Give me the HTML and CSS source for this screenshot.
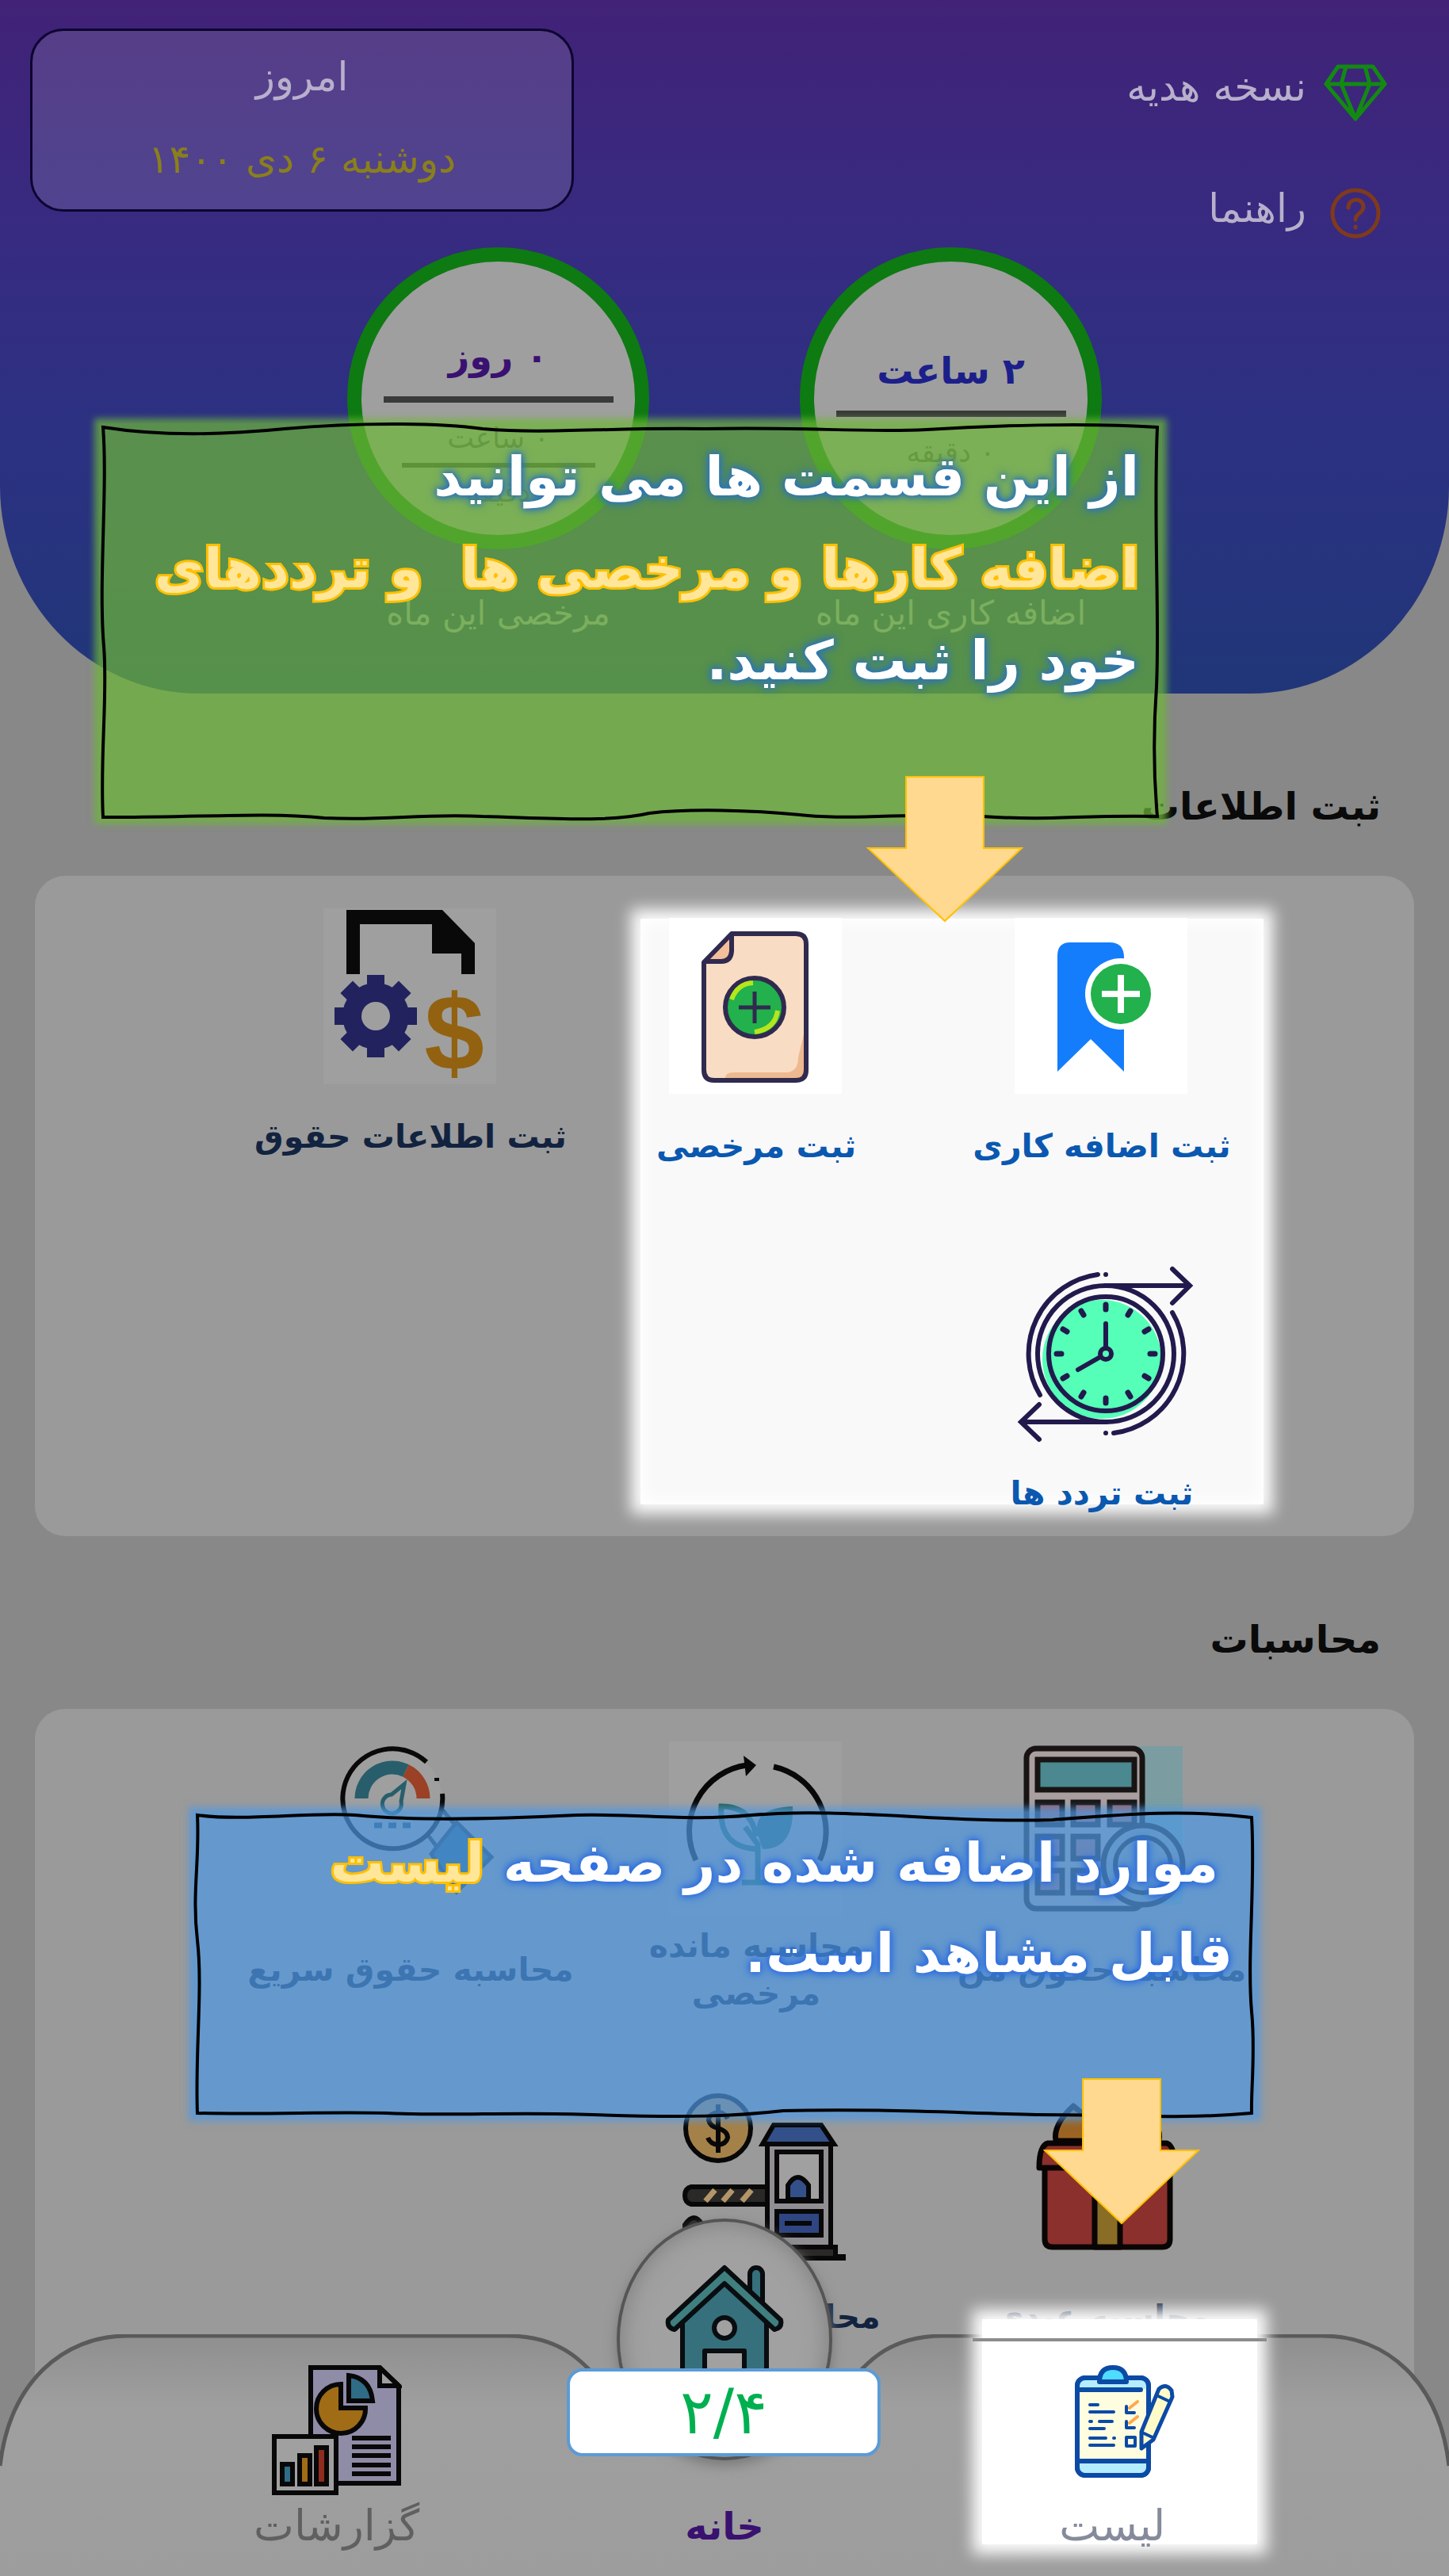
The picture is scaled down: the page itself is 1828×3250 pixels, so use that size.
FILE: index.html
```html
<!DOCTYPE html>
<html lang="fa" dir="rtl">
<head>
<meta charset="utf-8">
<title>خانه</title>
<meta name="viewport" content="width=device-width, initial-scale=1">
<link rel="stylesheet" href="styles.css">
</head>
<body>
<div class="app">

  <header class="hero">
    <div class="hero-top">
      <div class="quick-links">
        <a class="quick-link" href="#gift">
          <svg class="quick-icon" viewBox="0 0 80 80" fill="none" stroke="#128a12" stroke-width="5" stroke-linejoin="round" aria-hidden="true">
            <path d="M18 8H62L77 30L40 74L3 30ZM3 30H77M28 8L22 30L40 74L58 30L52 8"/>
          </svg>
          <span>نسخه هدیه</span>
        </a>
        <a class="quick-link" href="#help">
          <svg class="quick-icon" viewBox="0 0 80 80" fill="none" stroke="#803a1c" stroke-width="5" stroke-linecap="round" aria-hidden="true">
            <circle cx="40" cy="40" r="29"/>
            <path d="M31 33C31 20 50 20 50 32C50 40 40 40 40 48M40 57V58"/>
          </svg>
          <span>راهنما</span>
        </a>
      </div>
      <div class="today">
        <span class="today-title">امروز</span>
        <span class="today-date">دوشنبه ۶ دی ۱۴۰۰</span>
      </div>
    </div>
    <div class="rings">
      <figure class="ring-item">
        <div class="ring ring-overtime">
          <strong class="ring-value blue">۲ ساعت</strong>
          <span class="ring-bar"></span>
          <span class="ring-note">۰ دقیقه</span>
        </div>
        <figcaption>اضافه کاری این ماه</figcaption>
      </figure>
      <figure class="ring-item">
        <div class="ring ring-leave">
          <strong class="ring-value purple">۰ روز</strong>
          <span class="ring-bar"></span>
          <span class="ring-note">۰ ساعت</span>
          <span class="ring-bar short"></span>
          <span class="ring-note">دقیقه</span>
        </div>
        <figcaption>مرخصی این ماه</figcaption>
      </figure>
    </div>
  </header>

  <section class="section">
    <h2>ثبت اطلاعات</h2>
    <div class="card">
      <div class="spotlight"></div>
      <a class="tile lit" href="#overtime">
        <svg class="tile-icon" viewBox="0 0 220 222" aria-hidden="true">
          <rect width="218" height="222" fill="#fff"/>
          <path d="M54 48Q54 31 70 31H120Q138 31 138 50V194L96 153L54 194Z" fill="#147dfc"/>
          <circle cx="134" cy="96" r="45" fill="#fff"/>
          <circle cx="134" cy="96" r="38" fill="#22b14c"/>
          <path d="M110 96H158M134 72V120" stroke="#fff" stroke-width="8"/>
        </svg>
        <span class="tile-label">ثبت اضافه کاری</span>
      </a>
      <a class="tile lit" href="#leave">
        <svg class="tile-icon" viewBox="0 0 220 222" aria-hidden="true">
          <rect width="218" height="222" fill="#fff"/>
          <path d="M44 56L79 20H160Q173 20 173 33V192Q173 205 160 205H57Q44 205 44 192Z" fill="#f9dcc4"/>
          <path d="M172 138V192Q172 204 160 204H72Q68 195 84 195H150Q163 193 163 176Z" fill="#eeb98f"/>
          <path d="M44 56L79 20V42Q78 55 66 55Z" fill="#f4c09a"/>
          <path d="M44 56L79 20H160Q173 20 173 33V192Q173 205 160 205H57Q44 205 44 192ZM79 20V42Q78 55 66 55H44" fill="none" stroke="#302a4f" stroke-width="6" stroke-linejoin="round"/>
          <circle cx="108" cy="113" r="37" fill="#22b14c" stroke="#302a4f" stroke-width="6"/>
          <path d="M79 103Q86 83 106 82M137 117Q134 140 108 144" fill="none" stroke="#b5e61d" stroke-width="6"/>
          <path d="M88 113H128M108 93V133" stroke="#302a4f" stroke-width="5"/>
        </svg>
        <span class="tile-label">ثبت مرخصی</span>
      </a>
      <a class="tile" href="#salary-info">
        <svg class="tile-icon" viewBox="0 0 220 222" aria-hidden="true">
          <rect width="218" height="222" fill="#9f9f9f"/>
          <path d="M29 83V2H150L191 44V83H174V57H137V20H46V83Z" fill="#090909"/>
          <g fill="#22225f">
            <path d="M55 84H77V188H55ZM14 125H118V147H14Z"/>
            <path d="M55 84H77V188H55ZM14 125H118V147H14Z" transform="rotate(45 66 136)"/>
            <circle cx="66" cy="136" r="42"/>
          </g>
          <circle cx="66" cy="136" r="18" fill="#9f9f9f"/>
          <text x="165" y="204" class="glyph-dollar">$</text>
        </svg>
        <span class="tile-label">ثبت اطلاعات حقوق</span>
      </a>
      <a class="tile lit" href="#attendance">
        <svg class="tile-icon" viewBox="0 0 220 222" fill="none" stroke="#221a4d" stroke-width="6" stroke-linecap="round" aria-hidden="true">
          <circle cx="110" cy="119" r="75" fill="#55ffb8" stroke="none"/>
          <circle cx="115" cy="112" r="72"/>
          <circle cx="115" cy="112" r="86"/>
          <path d="M115 26H219M199 5L221 26L199 48M115 198H9M31 176L8 198L31 220"/>
          <path d="M105 12A101 101 0 0 0 32 164M199 60A101 101 0 0 1 125 212M115 12V12M115 212V212"/>
          <path d="M115 50V56M115 168V174M53 112H59M171 112H177M84 58L87 63M143 161L146 166M61 81L66 84M164 140L169 143M146 58L143 63M87 161L84 166M169 81L164 84M66 140L61 143" stroke-width="7"/>
          <path d="M115 104V74M108 116L80 132"/>
          <circle cx="115" cy="112" r="7"/>
        </svg>
        <span class="tile-label">ثبت تردد ها</span>
      </a>
    </div>
  </section>

  <section class="section">
    <h2>محاسبات</h2>
    <div class="card card-last">
      <a class="tile" href="#my-salary">
        <svg class="tile-icon" viewBox="0 0 220 222" aria-hidden="true">
          <rect x="100" y="6" width="112" height="200" fill="#7b9da1"/>
          <rect x="15" y="9" width="146" height="202" rx="12" fill="#a99f9f" stroke="#181414" stroke-width="7"/>
          <rect x="29" y="23" width="122" height="38" fill="#4b8890" stroke="#181414" stroke-width="7"/>
          <g fill="#9a6468" stroke="#181414" stroke-width="7">
            <rect x="29" y="77" width="31" height="28"/><rect x="74" y="77" width="31" height="28"/><rect x="120" y="77" width="31" height="28"/>
            <rect x="29" y="120" width="31" height="28"/><rect x="74" y="120" width="31" height="28"/>
            <rect x="29" y="163" width="31" height="28"/><rect x="74" y="163" width="31" height="28"/>
          </g>
          <circle cx="162" cy="156" r="50" fill="#8c9799" stroke="#181414" stroke-width="7"/>
          <circle cx="162" cy="156" r="35" fill="none" stroke="#181414" stroke-width="6"/>
        </svg>
        <span class="tile-label">محاسبه حقوق من</span>
      </a>
      <a class="tile" href="#leave-left">
        <svg class="tile-icon" viewBox="0 0 220 222" aria-hidden="true">
          <rect width="218" height="222" fill="#9f9f9f"/>
          <path d="M34 150A84 84 0 0 1 98 30M132 32A84 84 0 0 1 190 150" fill="none" stroke="#080808" stroke-width="7"/>
          <path d="M94 18L110 30L97 44Z" fill="#080808"/>
          <path d="M112 118Q104 84 156 82Q158 136 118 136Z" fill="#27625a"/>
          <path d="M112 136Q62 134 66 82Q104 82 110 120M96 108L112 130V178M92 178H134" fill="none" stroke="#27625a" stroke-width="7"/>
        </svg>
        <span class="tile-label">محاسبه مانده مرخصی</span>
      </a>
      <a class="tile" href="#quick-salary">
        <svg class="tile-icon" viewBox="0 0 220 222" aria-hidden="true">
          <path d="M124 108L148 84L172 112L150 142Z" fill="#9b9b9b" stroke="#1c2c36" stroke-width="5"/>
          <path d="M136 142L168 102L212 146L168 190Z" fill="#27597a" stroke="#1c3448" stroke-width="5"/>
          <circle cx="87" cy="72" r="62" fill="#9f9f9f"/>
          <path d="M130 26A63 63 0 1 0 150 66M143 46V50" fill="none" stroke="#090909" stroke-width="6"/>
          <path d="M48 72A39 39 0 0 1 104 37" fill="none" stroke="#285e6b" stroke-width="17"/>
          <path d="M104 37A39 39 0 0 1 126 72" fill="none" stroke="#9b4126" stroke-width="17"/>
          <path d="M102 54L98 76A12 12 0 1 1 86 67Z" fill="none" stroke="#285e6b" stroke-width="5"/>
          <path d="M64 106H74M82 106H92M100 106H110" stroke="#1c3c50" stroke-width="7"/>
        </svg>
        <span class="tile-label">محاسبه حقوق سریع</span>
      </a>
      <a class="tile" href="#bonus">
        <svg class="tile-icon" viewBox="-6 0 220 222" stroke="#0a0505" stroke-width="7" stroke-linejoin="round" aria-hidden="true">
          <path d="M110 66H46Q42 46 68 22Q86 36 110 62ZM110 66H176Q180 46 154 22Q134 36 110 62Z" fill="#9c6423"/>
          <path d="M32 96H190V190Q190 200 180 200H42Q32 200 32 190Z" fill="#8b302c"/>
          <path d="M36 69H186Q196 72 196 100H25Q25 72 36 69Z" fill="#8b302c"/>
          <path d="M95 69H127V200H95Z" fill="#896c26"/>
        </svg>
        <span class="tile-label">محاسبه عیدی</span>
      </a>
      <a class="tile" href="#toll">
        <svg class="tile-icon" viewBox="-6 0 220 222" stroke="#080808" stroke-width="6" aria-hidden="true">
          <circle cx="56" cy="50" r="41" fill="#a5814a"/>
          <path d="M68 38Q64 30 56 30Q44 32 44 40Q46 48 56 50Q68 54 68 62Q66 70 56 71Q46 70 43 62M56 20V81" fill="none"/>
          <path d="M22 124H120V146H22Q14 144 14 135Q14 126 22 124Z" fill="#2b2828"/>
          <path d="M40 142L52 128M62 142L74 128M86 142L98 128" stroke="#b39668" stroke-width="7"/>
          <path d="M14 212V172Q26 154 36 172V212Z" fill="#242424"/>
          <rect x="118" y="66" width="80" height="138" fill="#918e93"/>
          <path d="M126 46H186L202 70H112Z" fill="#34508a"/>
          <rect x="130" y="80" width="56" height="62" fill="#a0a0a0"/>
          <path d="M144 140V122Q156 102 170 122V140Z" fill="#34508a"/>
          <rect x="130" y="155" width="56" height="30" fill="#2f4683"/>
          <path d="M140 170H174"/>
          <path d="M108 200H204V212H214V214H108Z" fill="#2b2828"/>
        </svg>
        <span class="tile-label">محاسبه عوارض</span>
      </a>
    </div>
  </section>

  <nav class="nav">
    <svg class="nav-shape" viewBox="0 0 1828 303" preserveAspectRatio="none" aria-hidden="true">
      <defs>
        <linearGradient id="navFill" x1="0" y1="0" x2="0" y2="1">
          <stop offset="0" stop-color="#8f8f8f"/><stop offset="0.3" stop-color="#9f9f9f"/><stop offset="1" stop-color="#9d9d9d"/>
        </linearGradient>
      </defs>
      <path d="M0 165C12 60 80 2 160 2H640C720 2 745 45 790 100S860 150 914 150S995 155 1040 100S1110 2 1190 2H1668C1750 2 1816 60 1828 165V303H0Z" fill="url(#navFill)"/>
      <path d="M0 165C12 60 80 2 160 2H640C720 2 745 45 790 100S860 150 914 150S995 155 1040 100S1110 2 1190 2H1668C1750 2 1816 60 1828 165" fill="none" stroke="#5a5a5a" stroke-width="5"/>
    </svg>
    <a class="nav-item nav-lit" href="#list">
      <svg class="nav-icon" viewBox="-12 0 164 164" stroke="#0b4aa5" stroke-width="6" stroke-linecap="round" stroke-linejoin="round" aria-hidden="true">
        <rect x="26" y="16" width="90" height="123" rx="10" fill="#fffde0"/>
        <path d="M28 30V24Q28 16 36 16H106Q114 16 114 24V30ZM28 121H114V131Q114 138 106 138H36Q28 138 28 131Z" fill="#b5ecff" stroke="none"/>
        <rect x="26" y="16" width="90" height="123" rx="10" fill="none"/>
        <path d="M26 31H106M26 121H114" fill="none"/>
        <path d="M54 21Q54 3 71 3Q88 3 88 21Z" fill="#4fdcff"/>
        <path d="M42 50H52M42 59H72M42 71H44M54 71H70M42 80H60M42 92H62M72 92H73M42 101H72M88 52V60H98M88 71V79H98" fill="none" stroke-width="4"/>
        <path d="M92 54L102 46M92 73L102 65" stroke="#ffa94d" stroke-width="4"/>
        <rect x="88" y="91" width="11" height="11" fill="none" stroke-width="4"/>
        <path d="M107 84L129 30Q138 22 145 32L146 40L122 94L107 105Z" fill="#fffbc8" stroke-width="5"/>
        <path d="M126 38L143 46M108 85L123 92" fill="none" stroke-width="4"/>
      </svg>
      <span class="nav-label">لیست</span>
    </a>
    <a class="nav-item nav-home" href="#home">
      <span class="home-button">
        <svg viewBox="0 0 150 160" class="home-icon" stroke="#090d10" stroke-width="6" stroke-linejoin="round" aria-hidden="true">
          <rect x="107" y="4" width="16" height="56" rx="8" fill="#35707c"/>
          <path d="M22 72L75 22L128 72V154H22Z" fill="#35707c"/>
          <path d="M75 4L146 70Q148 80 138 82L75 24L12 82Q2 80 4 70Z" fill="#3f7f80"/>
          <circle cx="75" cy="80" r="13" fill="#a1a1a1"/>
          <rect x="50" y="109" width="50" height="45" fill="#a1a1a1"/>
        </svg>
      </span>
      <span class="nav-label">خانه</span>
    </a>
    <a class="nav-item" href="#reports">
      <svg class="nav-icon" viewBox="0 0 164 164" stroke="#080808" stroke-width="6" aria-hidden="true">
        <path d="M49 3H136L160 26V149H49Z" fill="#8f8ca8"/>
        <path d="M136 3V26H160Z" fill="#a0a0a0"/>
        <path d="M87 24A31 31 0 1 0 118 54H87Z" fill="#a06c15"/>
        <path d="M97 13Q124 16 127 45H97Z" fill="#2f6c86"/>
        <path d="M101 92H150M101 103H150M101 114H150M101 126H150M101 137H150"/>
        <rect x="3" y="90" width="78" height="71" fill="#a0a0a0"/>
        <path d="M13 125H26V150H13Z" fill="#2f6c86"/><path d="M35 114H48V150H35Z" fill="#a06c15"/><path d="M56 104H69V150H56Z" fill="#8e2c1d"/>
      </svg>
      <span class="nav-label">گزارشات</span>
    </a>
  </nav>

  <aside class="callout callout-green">
    <svg class="sketch" viewBox="0 0 1333 496" preserveAspectRatio="none" aria-hidden="true">
      <path d="M1 3C70 14 150 13 230 5C320 -3 420 -3 480 5C560 12 640 3 760 5C880 2 960 10 1040 6C1120 1 1240 -3 1331 3C1326 120 1334 240 1330 330C1325 400 1328 460 1331 494C1230 492 1200 500 1110 494C1020 488 960 500 880 492C820 486 740 484 690 490C640 502 560 496 480 494C400 490 360 500 280 496C200 488 120 496 1 495C-3 420 7 340 2 280C-5 200 7 80 1 3Z"/>
    </svg>
    <p>از این قسمت ها می توانید<br><em>اضافه کارها و مرخصی ها&nbsp; و ترددهای</em><br>خود را ثبت کنید.</p>
  </aside>
  <svg class="arrow arrow-top" viewBox="0 0 198 185" aria-hidden="true">
    <path d="M50 1H148V91H196L99 183L2 91H50Z"/>
  </svg>

  <aside class="callout callout-blue">
    <svg class="sketch" viewBox="0 0 1333 380" preserveAspectRatio="none" aria-hidden="true">
      <path d="M1 2C60 10 140 -2 200 2C260 8 360 8 480 2C560 0 620 10 700 2C820 -8 940 12 1080 8C1160 2 1240 -6 1331 5C1336 90 1325 180 1331 250C1336 300 1330 350 1331 378C1240 386 1180 380 1060 380C960 378 860 372 740 375C680 382 620 384 500 380C400 376 320 382 240 378C160 376 100 380 1 378C-2 300 8 220 1 160C-6 100 4 60 1 2Z"/>
    </svg>
    <p><span class="indent">موارد اضافه شده در صفحه <em>لیست</em></span><br>قابل مشاهد است.</p>
  </aside>
  <svg class="arrow arrow-bottom" viewBox="0 0 198 185" aria-hidden="true">
    <path d="M50 1H148V91H196L99 183L2 91H50Z"/>
  </svg>

  <div class="step">۲/۴</div>
</div>
</body>
</html>
```
FILE: styles.css
```css
* {
  box-sizing: border-box;
}

body {
  margin: 0;
  background: #888;
  font-family: "DejaVu Sans", sans-serif;
}

a {
  color: inherit;
  text-decoration: none;
}

.app {
  position: relative;
  overflow: hidden;
}

/* Header */

.hero {
  padding: 36px 38px 68px;
  background: linear-gradient(#412277, #382a80 30%, #2c3182 62%, #203678);
  border-radius: 0 0 250px 250px / 0 0 262px 262px;
  color: #b8b0cc;
}

.hero-top {
  display: flex;
  justify-content: space-between;
  align-items: flex-start;
}

.quick-links {
  display: flex;
  flex-direction: column;
  gap: 73px;
  padding: 40px 40px 0 0;
}

.quick-link {
  display: flex;
  align-items: center;
  gap: 22px;
  font-size: 50px;
  line-height: 80px;
}

.quick-link span {
  margin-top: -12px;
}

.quick-icon {
  width: 80px;
  height: 80px;
}

.today {
  display: flex;
  flex-direction: column;
  align-items: center;
  gap: 44px;
  width: 686px;
  padding: 28px 0 33px;
  border: 3px solid #0d0530;
  border-radius: 42px;
  background: rgba(255, 255, 255, 0.12);
  font-size: 50px;
  line-height: 60px;
}

.today-date {
  color: #8a7f1c;
}

.rings {
  display: flex;
  justify-content: center;
  gap: 190px;
  margin-top: 3px;
}

.ring-item {
  display: flex;
  flex-direction: column;
  align-items: center;
  width: 381px;
  margin: 0;
}

.ring-item figcaption {
  margin-top: 48px;
  color: #9a9ab8;
  font-size: 42px;
  line-height: 66px;
  white-space: nowrap;
}

.ring {
  display: flex;
  flex-direction: column;
  align-items: center;
  width: 381px;
  height: 381px;
  padding-top: 84px;
  border: 18px solid #0e7a12;
  border-radius: 50%;
  background: #9f9f9f;
}

.ring-overtime {
  padding-top: 102px;
}

.ring-value {
  font-size: 46px;
  line-height: 72px;
}

.blue {
  color: #1c1f8a;
}

.purple {
  color: #3a1070;
}

.ring-bar {
  width: 290px;
  height: 8px;
  margin: 14px 0;
  background: #3a3a3a;
}

.ring-bar.short {
  width: 244px;
  height: 6px;
  margin: 0;
}

.ring-note {
  color: #555;
  font-size: 36px;
  line-height: 62px;
}

/* Sections */

.section {
  padding: 100px 44px 0;
}

.hero + .section {
  padding-top: 112px;
}

.section h2 {
  margin: 0 42px 58px 0;
  color: #0a0a0a;
  font-size: 48px;
  line-height: 60px;
}

.card {
  position: relative;
  display: grid;
  grid-template-columns: repeat(3, 1fr);
  row-gap: 84px;
  padding: 41px 176px 0 256px;
  border-radius: 38px;
  background: #9a9a9a;
}

.card-last {
  padding-bottom: 261px;
}

.spotlight {
  position: absolute;
  inset: 54px 190px 40px 764px;
  background: #f9f9f9;
  box-shadow: 0 0 18px 12px #fbfbfb, inset 0 0 20px 4px #fff;
}

.tile {
  position: relative;
  display: flex;
  flex-direction: column;
  align-items: center;
  color: #12233f;
  font-size: 41px;
  font-weight: bold;
  line-height: 60px;
  text-align: center;
}

.tile.lit {
  margin: 12px 0 -12px;
  color: #0a58b0;
}

.tile-icon {
  width: 220px;
  height: 222px;
  overflow: visible;
}

.tile-label {
  display: flex;
  align-items: center;
  max-width: 420px;
  min-height: 132px;
}

.glyph-dollar {
  fill: #926210;
  font-family: "Liberation Sans", sans-serif;
  font-size: 136px;
  font-weight: bold;
  text-anchor: middle;
}

/* Bottom navigation */

.nav {
  position: absolute;
  inset: auto 0 0;
  display: grid;
  grid-template-columns: repeat(3, 1fr);
  align-content: end;
  align-items: end;
  height: 305px;
  padding: 0 180px 24px;
}

.nav-shape {
  position: absolute;
  inset: 0;
  width: 100%;
  height: 100%;
}

.nav-item {
  position: relative;
  display: flex;
  flex-direction: column;
  align-items: center;
  color: #606060;
  font-size: 54px;
  line-height: 78px;
}

.nav-icon {
  width: 164px;
  height: 164px;
}

.nav-label {
  position: relative;
  top: auto;
}

.nav-lit {
  color: #858b9b;
}

.nav-lit .nav-icon {
  position: relative;
  z-index: 1;
}

.nav-lit::before {
  content: "";
  position: absolute;
  inset: -58px 62px 16px 80px;
  background: #fff;
  box-shadow: 0 0 18px 12px #fdfdfd;
}

.nav-lit::after {
  content: "";
  position: absolute;
  inset: -34px 50px auto 68px;
  height: 4px;
  background: #8c8c8c;
}

.nav-home {
  color: #3a1070;
  font-size: 48px;
  font-weight: bold;
}

.home-button {
  display: flex;
  justify-content: center;
  width: 272px;
  height: 305px;
  margin-bottom: 44px;
  padding-top: 54px;
  border: 4px solid #555;
  border-radius: 50%;
  background: #a1a1a1;
  box-shadow: inset 0 0 30px #7c7c7c, 0 6px 16px #777;
}

.home-icon {
  width: 150px;
  height: 160px;
}

/* Guided tour */

.callout {
  position: absolute;
  color: #fff;
  font-size: 68px;
  font-weight: bold;
  white-space: nowrap;
}

.callout p {
  position: relative;
  margin: 0;
}

.callout-green {
  inset: 534px 362px auto 125px;
  padding: 10px 29px 142px 0;
  background: rgba(110, 184, 56, 0.7);
  box-shadow: 0 0 8px 6px rgba(110, 184, 56, 0.7);
  line-height: 116px;
  text-shadow: 0 0 6px #2e75b6, 0 0 10px #2e75b6, 0 0 14px #2e75b6;
}

.callout-blue {
  inset: 2286px 243px auto 244px;
  padding: 8px 30px 148px 0;
  background: rgba(78, 153, 226, 0.7);
  box-shadow: 0 0 8px 6px rgba(78, 153, 226, 0.7);
  line-height: 114px;
  text-shadow: 0 0 6px #2f6fe0, 0 0 10px #2f6fe0, 0 0 14px #2f6fe0;
}

.callout em {
  color: #ffe699;
  font-style: normal;
  text-shadow: none;
  -webkit-text-stroke: 6px #ffc000;
  paint-order: stroke fill;
}

.indent {
  padding-right: 18px;
}

.sketch {
  position: absolute;
  inset: 2px 4px;
  width: calc(100% - 8px);
  height: calc(100% - 4px);
  overflow: visible;
  fill: none;
  stroke: #000;
  stroke-width: 4px;
}

.arrow {
  position: absolute;
  width: 198px;
  height: 185px;
  fill: #ffd98f;
  stroke: #ffc000;
  stroke-width: 2px;
}

.arrow-top {
  top: 979px;
  left: 1093px;
}

.arrow-bottom {
  top: 2622px;
  left: 1316px;
}

.step {
  position: absolute;
  bottom: 151px;
  left: calc(50% - 199px);
  width: 396px;
  border: 4px solid #5b9bd5;
  border-radius: 20px;
  background: #fff;
  color: #00b050;
  font-size: 78px;
  line-height: 103px;
  text-align: center;
}
```
